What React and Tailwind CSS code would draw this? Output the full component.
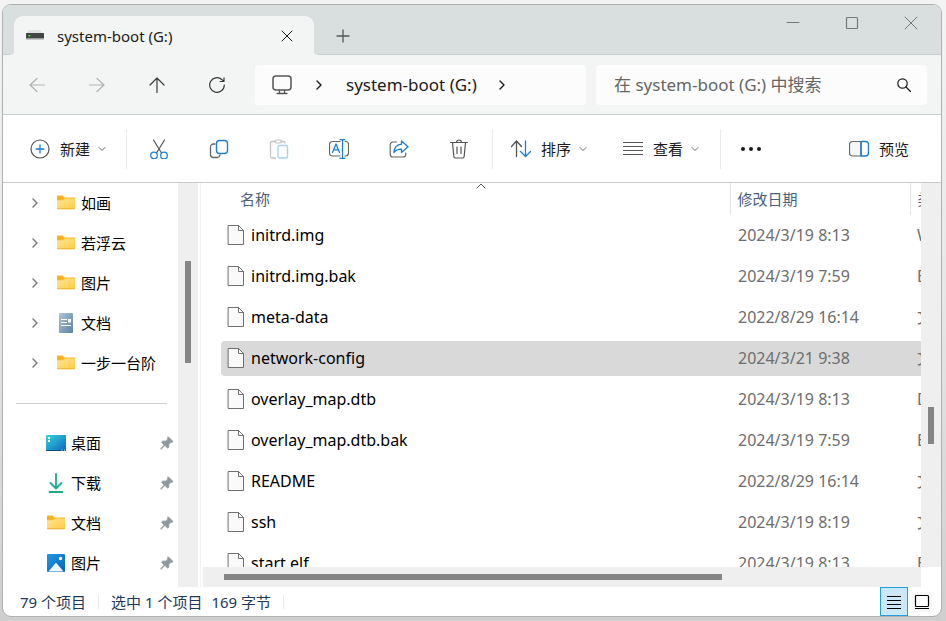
const toolIcons = [
  { label: "剪切", Icon: CutIcon },
  { label: "复制", Icon: CopyIcon },
  { label: "粘贴", Icon: PasteIcon, disabled: true },
  { label: "重命名", Icon: RenameIcon },
  { label: "共享", Icon: ShareIcon },
  { label: "删除", Icon: TrashIcon },
];

const folders = [
  { name: "如画", Icon: FolderIcon },
  { name: "若浮云", Icon: FolderIcon },
  { name: "图片", Icon: FolderIcon },
  { name: "文档", Icon: DocumentIcon },
  { name: "一步一台阶", Icon: FolderIcon },
];

const pinned = [
  { name: "桌面", Icon: DesktopIcon },
  { name: "下载", Icon: DownloadIcon },
  { name: "文档", Icon: FolderIcon },
  { name: "图片", Icon: PicturesIcon },
];

const files = [
  { name: "initrd.img", date: "2024/3/19 8:13", type: "WinRAR" },
  { name: "initrd.img.bak", date: "2024/3/19 7:59", type: "BAK 文件" },
  { name: "meta-data", date: "2022/8/29 16:14", type: "文件" },
  { name: "network-config", date: "2024/3/21 9:38", type: "文件", selected: true },
  { name: "overlay_map.dtb", date: "2024/3/19 8:13", type: "DTB 文件" },
  { name: "overlay_map.dtb.bak", date: "2024/3/19 7:59", type: "BAK 文件" },
  { name: "README", date: "2022/8/29 16:14", type: "文件" },
  { name: "ssh", date: "2024/3/19 8:19", type: "文件" },
  { name: "start.elf", date: "2024/3/19 8:13", type: "ELF 文件" },
];

function Svg({ size = 20, className = "", children }) {
  return (
    <svg
      width={size}
      height={size}
      viewBox={`0 0 ${size} ${size}`}
      fill="none"
      stroke="currentColor"
      strokeLinecap="round"
      strokeLinejoin="round"
      className={`shrink-0 ${className}`}
      aria-hidden="true"
    >
      {children}
    </svg>
  );
}

function DriveIcon() {
  return (
    <Svg className="text-[#444]">
      <path d="M4 4h11l3 4H1z" fill="#dfe2e4" stroke="none" />
      <rect x="1" y="7" width="18" height="6" rx=".5" fill="#444" stroke="none" />
      <rect x="1" y="12" width="18" height="1.500" fill="#9a9a9a" stroke="none" />
      <rect x="3.500" y="9" width="2" height="1.500" fill="#3fe03f" stroke="none" />
    </Svg>
  );
}

function CloseIcon({ size = 12 }) {
  return (
    <Svg size={size}>
      <path d={size === 12 ? "M1 1l10 10M11 1L1 11" : "M1 1l12 12M13 1L1 13"} />
    </Svg>
  );
}

function ChevronDown() {
  return (
    <Svg size={8} className="text-[#666]">
      <path d="M1 2.500l3 3 3-3" />
    </Svg>
  );
}

function ChevronRight({ className }) {
  return (
    <Svg size={10} className={className}>
      <path d="M3 1l4 4-4 4" strokeWidth="1.400" />
    </Svg>
  );
}

function CutIcon() {
  return (
    <Svg>
      <path d="M4.500 1L12.500 14M15.500 1L7.500 14" stroke="#555" strokeWidth="1.200" />
      <circle cx="5" cy="16.500" r="3.300" stroke="#1a7fd0" strokeWidth="1.300" />
      <circle cx="15" cy="16.500" r="3.300" stroke="#1a7fd0" strokeWidth="1.300" />
    </Svg>
  );
}

function CopyIcon() {
  return (
    <Svg>
      <path d="M6 5H4.500A3 3 0 0 0 1.500 8v7.500a3 3 0 0 0 3 3H8a3 3 0 0 0 3-2.500" stroke="#666" strokeWidth="1.300" />
      <rect x="7.500" y="1.500" width="11" height="13" rx="3" stroke="#1a7fd0" strokeWidth="1.400" />
    </Svg>
  );
}

function PasteIcon() {
  return (
    <Svg>
      <path d="M6 2.500H3a1.500 1.500 0 0 0-1.500 1.500v13.500A1.500 1.500 0 0 0 3 19h3.500M12 2.500h2.500A1.500 1.500 0 0 1 16 4" stroke="#c4c4c4" strokeWidth="1.300" />
      <rect x="6" y="1" width="6.500" height="3" rx="1.500" stroke="#c4c4c4" strokeWidth="1.200" />
      <rect x="9" y="6.500" width="9.500" height="12.500" rx="1.500" stroke="#a9d3f0" strokeWidth="1.400" />
    </Svg>
  );
}

function RenameIcon() {
  return (
    <Svg>
      <path d="M11 2.500H3.500a3 3 0 0 0-3 3v8.500a3 3 0 0 0 3 3H11M16 2.500h.5a3 3 0 0 1 3 3v8.500a3 3 0 0 1-3 3H16" stroke="#666" strokeWidth="1.200" />
      <path d="M13.500 1v18M11 .700h5M11 19.300h5M3.500 13.500l3.500-8.500 3.500 8.500M4.800 10.800h4.500" stroke="#1a7fd0" strokeWidth="1.300" />
    </Svg>
  );
}

function ShareIcon() {
  return (
    <Svg>
      <path d="M7.500 3H4a2.800 2.800 0 0 0-2.800 2.800v9.400A2.800 2.800 0 0 0 4 18h10a2.800 2.800 0 0 0 2.800-2.800V14" stroke="#666" strokeWidth="1.200" />
      <path d="M12.500 2l6.500 5.700-6.500 5.800v-3.300c-3.500-.2-5.700 1-7.500 3.300.3-5 2.700-8 7.500-8.300z" stroke="#1a7fd0" strokeWidth="1.300" />
    </Svg>
  );
}

function TrashIcon() {
  return (
    <Svg className="text-[#555]">
      <path d="M1.500 3.500h17M7.500 3.500a2.500 2.500 0 0 1 5 0M3.500 3.500l1.300 13.800a2 2 0 0 0 2 1.700h6.400a2 2 0 0 0 2-1.700l1.300-13.800M8 8v6.500M12 8v6.500" strokeWidth="1.200" />
    </Svg>
  );
}

function FolderIcon() {
  return (
    <Svg>
      <path d="M1 3.500c0-.6.400-1 1-1h4.500l2 2H18c.6 0 1 .4 1 1V8H1z" fill="#f8b31d" stroke="none" />
      <path d="M1 7.200h6l1.800-1.700H19V15c0 .6-.4 1-1 1H2c-.6 0-1-.4-1-1z" fill="url(#folder-face)" stroke="none" />
      <path d="M1.500 15.800h17" stroke="#eeb030" />
      <defs>
        <linearGradient id="folder-face" x1="0" y1="0" x2="1" y2="1">
          <stop stopColor="#ffe69a" />
          <stop offset="1" stopColor="#ffca3e" />
        </linearGradient>
      </defs>
    </Svg>
  );
}

function DocumentIcon() {
  return (
    <Svg>
      <rect x="3" y="0" width="14" height="20" rx="1" fill="url(#doc-face)" stroke="none" />
      <path d="M5 6.500h6M5 9.500h6M5 12.500h10" stroke="#fff" strokeLinecap="butt" />
      <rect x="12" y="6" width="3" height="3.500" fill="#fff" stroke="none" />
      <defs>
        <linearGradient id="doc-face" x1="0" y1="0" x2="1" y2="1">
          <stop stopColor="#adc4d8" />
          <stop offset="1" stopColor="#5f82a5" />
        </linearGradient>
      </defs>
    </Svg>
  );
}

function DesktopIcon() {
  return (
    <Svg>
      <rect x="0" y="2" width="20" height="16" rx="1" fill="url(#desk-face)" stroke="none" />
      <path d="M0 17h20v0a1 1 0 0 1-1 1H1a1 1 0 0 1-1-1z" fill="#0d4c82" stroke="none" />
      <path d="M2 4h2v2H2zM2 7h2v2H2z" fill="#fff" stroke="none" />
      <path d="M15.500 17.200h1M18 17.200h1" stroke="#d8f2ff" strokeLinecap="butt" />
      <defs>
        <linearGradient id="desk-face" x1="0" y1="0" x2="1" y2="1">
          <stop stopColor="#35d3df" />
          <stop offset="1" stopColor="#0b67bd" />
        </linearGradient>
      </defs>
    </Svg>
  );
}

function DownloadIcon() {
  return (
    <Svg className="text-[#19ad8c]">
      <path d="M10 1v14M4.500 10l5.500 5.500 5.500-5.500" strokeWidth="1.800" />
      <path d="M3.500 19h13" strokeWidth="1.800" />
    </Svg>
  );
}

function PicturesIcon() {
  return (
    <Svg>
      <rect x="1" y="1" width="18" height="18" rx="1" fill="url(#pic-face)" stroke="none" />
      <path d="M2.500 18.500l6.500-7.800a1.300 1.300 0 0 1 2 0l6.500 7.800z" fill="#eef6ff" stroke="none" />
      <circle cx="14.500" cy="5.500" r="1.700" fill="#fff" stroke="none" />
      <defs>
        <linearGradient id="pic-face" x1="0" y1="0" x2="1" y2="1">
          <stop stopColor="#1f9be6" />
          <stop offset="1" stopColor="#0a62b4" />
        </linearGradient>
      </defs>
    </Svg>
  );
}

function PinIcon() {
  return (
    <Svg size={14}>
      <path d="M8.500 1l4.500 4.500-1 .8-1-.1-2.200 2.300.1 2.500-1.200 1.200-2.800-2.800-3.800 3.800-.5-.5L4.300 9 1.600 6.200l1.200-1.200 2.600.2 2.400-2.300L7.600 1.800z" fill="#8f999f" stroke="#8f999f" strokeWidth=".8" />
    </Svg>
  );
}

function FileIcon() {
  return (
    <Svg className="text-[#707070]">
      <path d="M2.500.5h10l5 5v14h-15z" fill="#fafafa" strokeLinejoin="miter" />
      <path d="M12.500.5v5h5" strokeLinejoin="miter" />
    </Svg>
  );
}

function NavButton({ label, disabled, children }) {
  return (
    <button
      aria-label={label}
      disabled={disabled}
      className="flex h-10 w-[60px] items-center justify-center text-[#3a3a3a] disabled:text-[#b0b3b2]"
    >
      {children}
    </button>
  );
}

function TitleBar() {
  return (
    <header className="flex h-[50px] border-b border-[#c5d0cd] bg-[#d9dfde]">
      <div className="relative mt-[11px] ml-[11px] -mb-px flex w-[300px] items-center rounded-t-[9px] bg-[#f3f5f4] pr-[21px] pl-[11px]">
        <span className="absolute bottom-0 -left-1 size-1 bg-[#f3f5f4]">
          <span className="block size-1 rounded-br bg-[#d9dfde]" />
        </span>
        <span className="absolute -right-1 bottom-0 size-1 bg-[#f3f5f4]">
          <span className="block size-1 rounded-bl bg-[#d9dfde]" />
        </span>
        <DriveIcon />
        <span className="ml-3 flex-1 text-[#1b1b1b]">system-boot (G:)</span>
        <button aria-label="关闭标签页">
          <CloseIcon />
        </button>
      </div>
      <button aria-label="新建标签页" className="mt-3 ml-[9px] flex w-10 items-center justify-center text-[#555]">
        <Svg size={14}>
          <path d="M7 1v12M1 7h12" strokeWidth="1.300" />
        </Svg>
      </button>
      <div className="mr-px ml-auto flex h-9 text-[#777]">
        <button aria-label="最小化" className="flex w-[59px] items-center justify-center">
          <Svg size={14}>
            <path d="M1 6.500h12" />
          </Svg>
        </button>
        <button aria-label="最大化" className="flex w-[59px] items-center justify-center">
          <Svg size={14}>
            <rect x="1.500" y="1.500" width="11" height="11" rx="1" strokeWidth="1.200" />
          </Svg>
        </button>
        <button aria-label="关闭" className="flex w-[59px] items-center justify-center">
          <CloseIcon size={14} />
        </button>
      </div>
    </header>
  );
}

function AddressBar() {
  return (
    <div className="flex h-[60px] items-center border-b border-[#c5d0cd] bg-[#f3f5f4] pr-3.5 pl-1">
      <NavButton label="后退" disabled>
        <Svg size={16}>
          <path d="M15.500 8H1M8 1.500L1 8l7 6.500" strokeWidth="1.200" />
        </Svg>
      </NavButton>
      <NavButton label="前进" disabled>
        <Svg size={16}>
          <path d="M.5 8H15M8 1.500L15 8l-7 6.500" strokeWidth="1.200" />
        </Svg>
      </NavButton>
      <NavButton label="上移">
        <Svg size={16}>
          <path d="M8 15.500V1M1 8l7-7 7 7" strokeWidth="1.200" />
        </Svg>
      </NavButton>
      <NavButton label="刷新">
        <Svg size={16}>
          <path d="M15.300 8A7.300 7.300 0 1 1 13 2.700l1.500 1.500M15 .800v3.700h-3.800" strokeWidth="1.200" />
        </Svg>
      </NavButton>
      <div className="ml-2 grid flex-1 grid-cols-2 gap-2.5 text-[17px]">
        <nav aria-label="地址" className="flex h-10 items-center rounded bg-[#fcfcfc] pl-[17px] text-[#1b1b1b]">
          <Svg className="text-[#555]">
            <rect x="1" y="1" width="18" height="14" rx="3" strokeWidth="1.500" />
            <path d="M7.500 15.500v3M12.500 15.500v3M5 18.500h10" strokeWidth="1.300" />
          </Svg>
          <ChevronRight className="mx-[22px]" />
          <a href="#drive" className="whitespace-nowrap">
            system-boot (G:)
          </a>
          <ChevronRight className="ml-5" />
        </nav>
        <div className="flex h-10 items-center rounded bg-[#fcfcfc] pr-4 pl-[18px]">
          <input
            type="search"
            aria-label="搜索"
            placeholder="在 system-boot (G:) 中搜索"
            className="w-0 flex-1 bg-transparent outline-none placeholder:text-[#666]"
          />
          <button aria-label="开始搜索">
            <Svg size={14}>
              <circle cx="5.500" cy="5.500" r="4.700" strokeWidth="1.200" />
              <path d="M9 9l4.500 4.500" strokeWidth="1.300" />
            </Svg>
          </button>
        </div>
      </div>
    </div>
  );
}

function Divider() {
  return <span className="h-10 w-px bg-[#ebebeb]" />;
}

function Toolbar() {
  return (
    <div className="flex h-[68px] items-center border-b border-[#c8cccb] pr-8">
      <button className="flex w-[123px] items-center gap-2 pl-[27px]">
        <Svg>
          <circle cx="10" cy="10" r="9" stroke="#555" strokeWidth="1.200" />
          <path d="M10 6v8M6 10h8" stroke="#1a7fd0" strokeWidth="1.300" />
        </Svg>
        <span className="ml-0.5">新建</span>
        <ChevronDown />
      </button>
      <Divider />
      <div className="ml-0.5 flex">
        {toolIcons.map(({ label, Icon, disabled }) => (
          <button
            key={label}
            aria-label={label}
            disabled={disabled}
            className="flex h-10 w-[60px] items-center justify-center"
          >
            <Icon />
          </button>
        ))}
      </div>
      <span className="w-[3px]" />
      <Divider />
      <button className="ml-[18px] flex items-center gap-2">
        <Svg>
          <path d="M5.500 17.500V2M.5 7.500l5-5.500 5 5.500" stroke="#555" strokeWidth="1.300" />
          <path d="M14.500 2v15.500M9.500 12.500l5 5 5-5" stroke="#1a7fd0" strokeWidth="1.300" />
        </Svg>
        <span className="ml-0.5">排序</span>
        <ChevronDown />
      </button>
      <button className="ml-9 flex items-center gap-2">
        <Svg className="text-[#555]">
          <path d="M0 3.500h20M0 7.500h20M0 11.500h20M0 15.500h20" strokeLinecap="butt" />
        </Svg>
        <span className="ml-0.5">查看</span>
        <ChevronDown />
      </button>
      <span className="w-[21px]" />
      <Divider />
      <button aria-label="更多" className="ml-5">
        <Svg>
          <path d="M2 10h.01M10 10h.01M18 10h.01" stroke="#1b1b1b" strokeWidth="4" />
        </Svg>
      </button>
      <button className="ml-auto flex items-center gap-2.5">
        <Svg>
          <path d="M12 2.500H3.500a3 3 0 0 0-3 3v8.500a3 3 0 0 0 3 3H12z" stroke="#666" strokeWidth="1.200" fill="#f7f7f7" />
          <path d="M12 2.500h4.500a3 3 0 0 1 3 3v8.500a3 3 0 0 1-3 3H12z" stroke="#1a7fd0" strokeWidth="1.400" />
        </Svg>
        预览
      </button>
    </div>
  );
}

function Sidebar() {
  return (
    <aside className="flex w-[195px] shrink-0 text-black">
      <nav aria-label="导航窗格" className="flex-1">
        <ul>
          {folders.map(({ name, Icon }) => (
            <li key={name}>
              <a href="#folder" className="flex h-10 items-center pl-[27px]">
                <ChevronRight className="text-[#777]" />
                <span className="ml-4">
                  <Icon />
                </span>
                <span className="ml-[5px]">{name}</span>
              </a>
            </li>
          ))}
        </ul>
        <div className="flex h-10 items-center pr-[11px] pl-[13px]">
          <hr className="w-full border-[#d0d0d0]" />
        </div>
        <ul>
          {pinned.map(({ name, Icon }) => (
            <li key={name}>
              <a href="#pinned" className="flex h-10 items-center pr-1 pl-[43px]">
                <Icon />
                <span className="ml-[5px] flex-1">{name}</span>
                <PinIcon />
              </a>
            </li>
          ))}
        </ul>
      </nav>
      <div className="flex w-5 justify-center bg-[#efefef] pt-[78px]">
        <span className="h-[102px] w-1.5 bg-[#858585]" />
      </div>
    </aside>
  );
}

function FileTable() {
  return (
    <table className="w-full table-fixed border-collapse text-left">
      <thead>
        <tr className="h-8 text-[#4c607a]">
          <th className="relative border-r border-[#e5e5e5] py-0 pl-[37px] font-normal">
            名称
            <Svg size={10} className="absolute -top-px right-[244px] text-[#555]">
              <path d="M1 6l4-4 4 4" />
            </Svg>
          </th>
          <th className="w-[180px] border-r border-[#e5e5e5] py-0 pl-[7px] font-normal">修改日期</th>
          <th className="w-[11px] overflow-hidden py-0 pl-[7px] font-normal whitespace-nowrap">类型</th>
        </tr>
      </thead>
      <tbody>
        {files.map((file) => {
          const bg = file.selected ? "bg-[#d9d9d9]" : "";
          return (
            <tr key={file.name} className="text-base leading-5 text-[#6d6d6d]">
              <td className="py-[3px] pl-[18px]">
                <div className={`flex h-[35px] items-center rounded-l-sm pb-px pl-[5px] text-black ${bg}`}>
                  <FileIcon />
                  <span className="ml-[5px]">{file.name}</span>
                </div>
              </td>
              <td className="py-[3px]">
                <div className={`flex h-[35px] items-center pb-px pl-2 ${bg}`}>{file.date}</div>
              </td>
              <td className="overflow-hidden py-[3px]">
                <div className={`flex h-[35px] items-center pb-px pl-[7px] whitespace-nowrap ${bg}`}>{file.type}</div>
              </td>
            </tr>
          );
        })}
      </tbody>
    </table>
  );
}

function StatusBar() {
  return (
    <footer className="flex h-[29px] shrink-0 items-center pr-[9px] pl-[17px] text-[#1e395b]">
      <span>79 个项目</span>
      <span className="mx-3 h-3.5 w-px bg-[#ebebeb]" />
      <span>选中 1 个项目</span>
      <span className="ml-[9px]">169 字节</span>
      <span className="ml-3 h-3.5 w-px bg-[#ebebeb]" />
      <button
        aria-label="详细信息"
        aria-pressed="true"
        className="ml-auto flex h-[29px] w-7 items-center justify-center border border-[#26a0da] bg-[#cce8f7] text-black"
      >
        <Svg size={16}>
          <path d="M1 2.500h14M1 6.500h14M1 10.500h14M1 14.500h14" strokeLinecap="butt" />
        </Svg>
      </button>
      <button aria-label="大图标" className="ml-1 flex h-5 w-5 items-center justify-center rounded-sm bg-[#f7f7f7] text-black">
        <Svg size={16}>
          <rect x="1.500" y="1.500" width="13" height="11" rx="1" fill="#fff" strokeWidth="1.200" />
          <path d="M1 14.500h14" strokeLinecap="butt" />
        </Svg>
      </button>
    </footer>
  );
}

export default function App() {
  return (
    <div className="h-screen bg-linear-to-b from-[#f3f3f3] via-[#e6e6e6] to-[#cecece] pt-1 pr-1 pb-1 pl-0.5 font-['Noto_Sans','Noto_Sans_CJK_SC',sans-serif] text-[15px] leading-5 text-[#1b1b1b]">
      <div className="flex h-full flex-col overflow-hidden rounded-[9px] border border-[#afb1b1] bg-white">
        <TitleBar />
        <AddressBar />
        <Toolbar />
        <div className="flex min-h-0 flex-1 overflow-hidden">
          <Sidebar />
          <main className="ml-0.5 flex min-w-0 flex-1 flex-col border-l border-[#f2f2f2] pl-0.5">
            <div className="flex min-h-0 flex-1">
              <div className="min-w-0 flex-1 overflow-hidden">
                <FileTable />
              </div>
              <div className="flex w-5 shrink-0 justify-center bg-[#efefef] pt-56">
                <span className="h-[37px] w-1.5 bg-[#858585]" />
              </div>
            </div>
            <div className="mr-5 flex h-5 shrink-0 items-center bg-[#efefef] pl-[21px]">
              <span className="h-1.5 w-5/7 bg-[#858585]" />
            </div>
          </main>
        </div>
        <StatusBar />
      </div>
    </div>
  );
}
